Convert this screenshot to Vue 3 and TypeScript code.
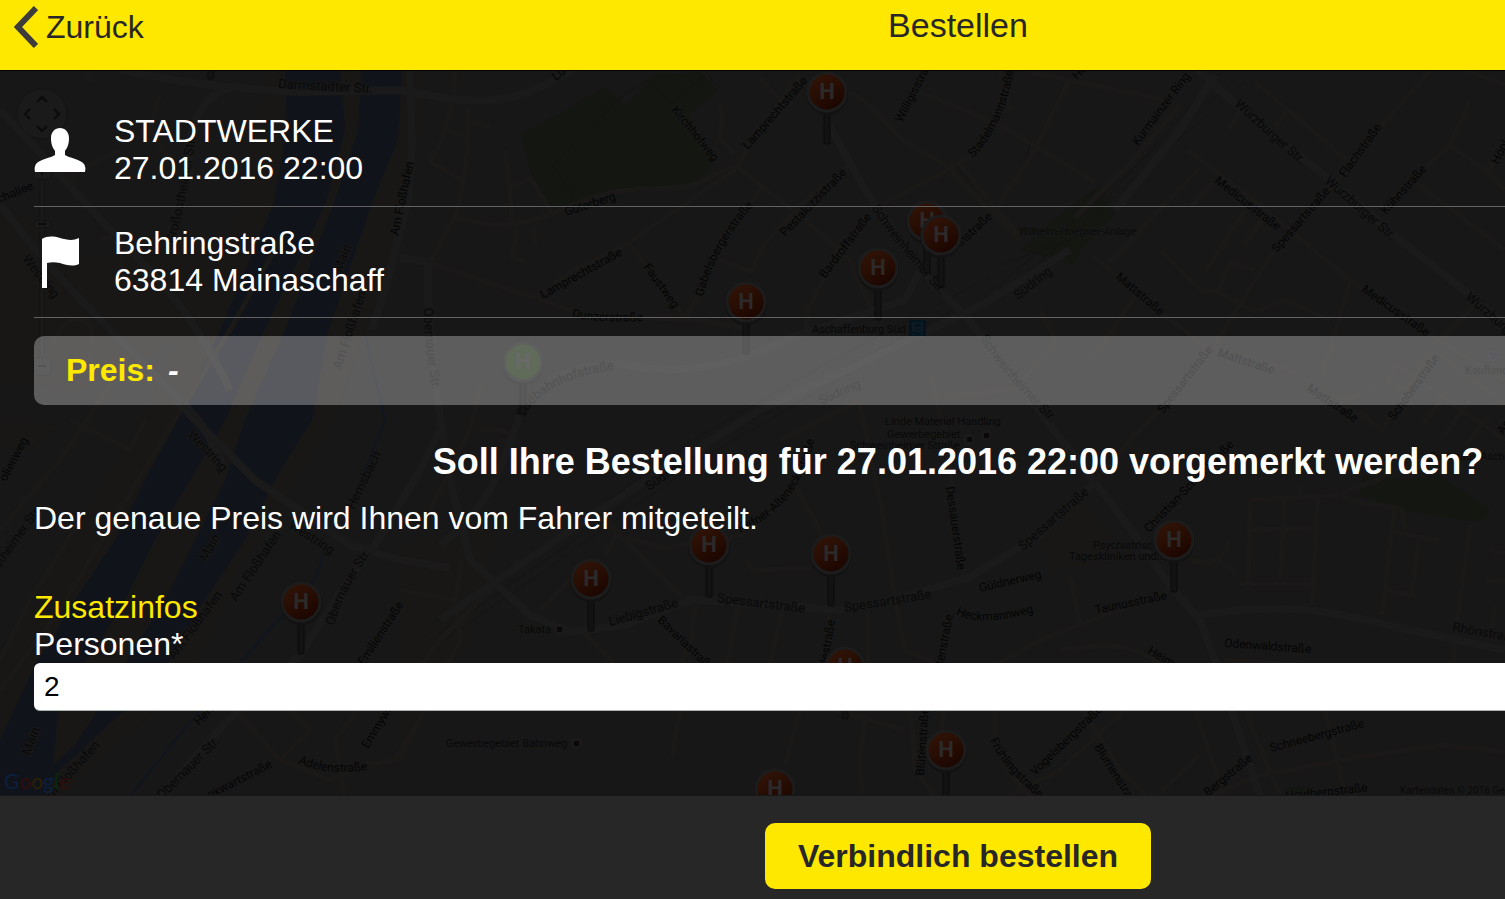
<script setup lang="ts">
import { ref } from 'vue'

interface Trip {
  name: string
  time: string
  street: string
  city: string
}

interface Pin {
  x: number
  y: number
  green?: boolean
}

interface CurvedLabel {
  text: string
  d: string
  major?: boolean
}

type StraightLabel = [text: string, x: number, y: number, angle: number, kind?: string]

const trip: Trip = {
  name: 'STADTWERKE',
  time: '27.01.2016 22:00',
  street: 'Behringstraße',
  city: '63814 Mainaschaff',
}

const persons = ref('2')

const pins: Pin[] = [
  { x: 211, y: 27 },
  { x: 827, y: 92 },
  { x: 927, y: 221 },
  { x: 941, y: 235 },
  { x: 878, y: 268 },
  { x: 746, y: 302 },
  { x: 523, y: 362, green: true },
  { x: 709, y: 545 },
  { x: 831, y: 554 },
  { x: 591, y: 579 },
  { x: 301, y: 602 },
  { x: 1174, y: 540 },
  { x: 845, y: 667 },
  { x: 946, y: 750 },
  { x: 775, y: 789 },
]

const mainRoads: string[] = [
  'M120 70 C190 84 240 90 300 92 L400 90 C440 98 470 104 510 98 C545 88 560 76 580 66',
  'M190 175 C185 130 200 90 240 86',
  'M0 205 C50 270 90 310 150 370 S200 420 225 470',
  'M175 400 L255 480 L350 545 L400 560 L450 568',
  'M410 62 L412 150 L408 200 L385 290 L372 330',
  'M0 110 C40 150 80 200 130 250 S200 330 230 390',
  'M428 262 L428 300 L436 390 L450 480 L470 560 L530 615 L570 632 L625 625 L690 600 L790 606 L840 610 L900 598 L970 577 L1040 535 L1095 482',
  'M400 258 L428 262',
  'M440 545 C500 500 505 450 520 415 C540 380 570 364 620 364 C680 376 730 368 790 338 L905 300 L925 262',
  'M825 118 L865 190 L925 275 L965 315 L1050 425 L1095 482 L1135 535 L1172 588 L1200 620 L1222 680 L1260 796',
  'M1200 615 C1280 602 1330 610 1400 628 L1505 650',
  'M440 620 L600 510 L760 410 L900 345 L985 303 L1070 250',
  'M1190 62 L1240 108 L1330 180 L1400 240 L1470 295 L1530 345',
  'M1115 210 L1180 130 L1215 75',
  'M160 796 L230 718 L300 655 L345 585 L375 545 L420 470 L440 430',
]

const minorRoads: string[] = [
  'M455 70 L453 100 L442 140 L430 162 L462 180 M468 107 L467 150 L462 190 L456 215 L430 262',
  'M442 128 L468 138 M468 120 L490 127',
  'M456 217 C490 228 520 228 550 214 L580 202 C640 180 670 195 700 182 L735 165',
  'M505 150 L510 190 L512 225 M510 187 L530 178 L552 213 M517 228 L512 258 L525 262 M533 226 L535 245',
  'M428 262 L535 298 L585 315 L645 318 L700 320 L750 330',
  'M535 298 L570 272 L625 245 L735 170 L760 130 L800 75',
  'M630 245 L680 310 L685 318 L705 285 L715 255 L762 187',
  'M735 165 L760 185 L800 215 L850 260 L875 318',
  'M715 258 L752 272 L760 250 L800 205 L850 165',
  'M720 104 L722 118 L720 138 L735 155 M760 78 L778 98',
  'M850 92 C875 105 890 130 905 142 L945 165 L1020 240 M880 205 L945 172 L985 145',
  'M920 92 L1000 125 L1095 182 M1070 78 L1035 150 L998 205 L950 250 M1030 72 L1165 100',
  'M1075 218 L1130 163 L1180 105',
  'M1092 255 L1145 300 L1210 350 M1110 262 L1142 230',
  'M960 165 L1018 235 M1000 70 L1010 110',
  'M805 335 L808 310 L845 235',
  'M1188 150 L1260 205 L1350 280 L1430 335 L1505 380',
  'M1200 168 L1130 240 M1215 180 L1190 208 M1245 210 L1205 272 M1262 220 L1243 246',
  'M1160 250 L1200 290 L1218 292 L1230 262 L1255 270 M1218 292 L1255 312 L1285 300 L1330 320 M1350 282 L1330 350 L1320 380',
  'M1273 252 L1230 320 L1195 375 L1130 440 L1095 482',
  'M1330 190 L1380 128 L1430 70 M1255 82 L1347 160 M1286 112 L1275 128 M1240 112 L1228 130',
  'M1505 85 L1460 68 M1470 100 L1450 145 L1485 170 L1505 190 M1450 145 L1385 205 M1415 182 L1505 250',
  'M1490 170 L1505 140 M1480 300 L1430 350 L1382 430 L1290 370 L1200 345',
  'M1382 430 L1360 412 M1375 385 L1350 400 L1330 395 M1395 365 L1388 380 L1420 400 M1440 355 L1505 405',
  'M1395 364 L1505 440 M1450 388 L1422 425 M1470 400 L1445 435 M1490 415 L1465 445',
  'M1140 290 L1105 340 L1090 360 M1040 310 L1058 345 L1010 390 L945 396 M930 372 L948 450 L960 560',
  'M860 405 L880 500 L895 598 M780 440 L820 420 L860 400',
  'M1250 500 L1248 590 M1285 500 L1280 580 M1318 495 L1312 605 M1250 500 L1340 495 M1247 530 L1318 528 M1240 584 L1312 584 M1300 485 L1300 498',
  'M1340 495 C1360 482 1380 485 1390 470 M1340 495 C1360 508 1385 502 1402 510 L1405 530 M1394 510 L1382 615 M1392 532 L1438 540 M1418 540 L1412 595 L1385 590',
  'M1470 525 L1455 640 L1450 700 M1490 550 L1505 553 M1485 580 L1505 582 M1495 605 L1490 640',
  'M1190 560 C1215 568 1225 555 1230 540 M1215 558 L1235 572',
  'M1070 575 L1080 625 M960 685 L1040 640 L1105 615 L1170 590 M1060 650 C1100 645 1130 640 1160 665',
  'M1225 660 L1340 668 L1450 680 M1312 668 L1312 690',
  'M685 600 L640 555 L605 520 M540 610 L570 580 M585 634 L640 690',
  'M605 556 L615 535 L665 548 L745 535 M747 560 L752 570 L810 568 M785 470 L815 520 L830 560',
  'M695 605 L692 640 L680 665 M738 605 L730 650 L720 690 M782 610 L770 665 M830 610 L825 665 M868 610 L868 665 M895 600 L905 650 L940 665',
  'M680 710 L672 755 M800 710 L785 765 M865 715 L860 765 L863 796 M820 706 L905 730',
  'M910 700 L915 770 L935 796 M995 710 C990 750 1010 780 1035 800 M945 700 L942 730',
  'M1125 710 L1060 770 L1010 796 M1080 705 L1120 770 L1150 800 M1195 710 L1225 800 M1200 755 L1110 840 M1245 710 L1280 796 M1325 710 L1340 770 L1345 800',
  'M1200 800 L1260 775 L1370 755 L1445 745 L1505 752 M1370 800 L1440 820 L1505 815',
  'M240 715 L280 760 L330 780 L370 762 M290 710 L310 730 L280 760 M345 800 L335 740 L365 700 M370 764 L395 760 L425 710',
  'M400 590 L455 600 L460 640 L440 680 L400 760 M455 600 L462 560',
  'M380 720 L440 640 L520 560 M425 520 L470 430 L482 380 M480 430 L500 430 L520 440',
  'M52 350 C55 320 85 310 92 330 L90 360 M100 240 C120 230 130 260 115 290 M70 420 L110 440 L130 450 L145 420',
  'M0 530 L60 460 L100 400 L140 340 M0 660 L30 600 L80 520',
  'M70 190 L78 160 M85 70 L95 82 M160 95 L150 130 L170 160 M60 180 L120 150',
  'M280 240 L230 330 L150 460 L60 610 L0 690',
]

const railways: string[] = [
  'M430 640 L560 550 L700 450 L830 375 L1000 285 L1080 215 L1240 75',
  'M436 646 L566 556 L706 456 L836 381 L1006 291 L1086 221 L1246 81',
  'M420 632 L550 542 L690 442 L820 367 L990 277',
  'M1000 265 L1070 240 L1110 195 L1230 62',
]

const labels: StraightLabel[] = [
  ['Darmstädter Str.', 278, 88, 3, 'major'],
  ['challee', -1, 203, -22],
  ['Am Floßhafen', 398, 236, -78],
  ['Westring', 22, 259, 52, 'major'],
  ['Main', 341, 273, -68, 'major'],
  ['Am Floßhafen', 341, 370, -72, 'major'],
  ['olienweg', 6, 482, -62],
  ['Großostheimer Str.', -22, 598, -54, 'major'],
  ['Westring', 187, 435, 47, 'major'],
  ['Westring', 288, 527, 33, 'major'],
  ['Main', 206, 562, -60, 'major'],
  ['Am Floßhafen', 236, 602, -56, 'major'],
  ['Hemsbach', 354, 510, -64, 'major'],
  ['Am Floßhafen', 174, 660, -53, 'major'],
  ['Emilienstraße', 364, 666, -57],
  ['Main', 30, 756, -70, 'major'],
  ['Am Floßhafen', 46, 806, -48, 'major'],
  ['Hemsbach', 199, 726, -45],
  ['Obernauer Str.', 162, 800, -45, 'major'],
  ['nkwartstraße', 210, 799, -27],
  ['Emmyweg', 368, 749, -58],
  ['Lo', 556, 81, -38],
  ['Kirchhofweg', 671, 110, 51],
  ['Lamprechtstraße', 748, 150, -49],
  ['Güterberg', 566, 216, -18],
  ['Lamprechtstraße', 543, 299, -29],
  ['Faustweg', 643, 267, 54],
  ['Pestalozzistraße', 785, 237, -46],
  ['Willigisstraße', 902, 123, -63],
  ['Ho', 1077, 80, -45],
  ['Kurmainzer Ring', 1138, 146, -53],
  ['Bardroffstraße', 825, 279, -53],
  ['instraße', 961, 247, -43],
  ['Wilhelm-Hoegner-Anlage', 1019, 235, 0, 'park-name'],
  ['Südring', 1018, 300, -38, 'major'],
  ['Mattstraße', 1115, 278, 40],
  ['Aschaffenburg Süd', 812, 333, 0, 'place'],
  ['Würzburger Str.', 1234, 105, 42, 'major'],
  ['Flachstraße', 1345, 178, -54],
  ['Würzburger Str.', 1324, 182, 41, 'major'],
  ['Kühnstraße', 1386, 215, -48],
  ['Medicusstraße', 1214, 182, 38],
  ['Spessartstraße', 1277, 253, -49],
  ['Medicusstraße', 1361, 291, 35],
  ['Würzburger Str.', 1465, 298, 41, 'major'],
  ['Höpl', 1498, 165, -63],
  ['Südring', 649, 491, -34, 'major'],
  ['Südring', 821, 405, -24, 'major'],
  ['Linde Material Handling', 885, 425, 0, 'place'],
  ['Gewerbegebiet', 887, 438, 0, 'place'],
  ['Schweinheimer Straße', 850, 449, 0, 'place'],
  ['Dessauerstraße', 946, 487, 82],
  ['Spessartstraße', 1023, 551, -41, 'major'],
  ['Spessartstraße', 1163, 414, -52],
  ['Christian-Schad-Straße', 1149, 533, -46],
  ['Psychiatrisc', 1093, 549, 0, 'place'],
  ['Tageskliniken und...', 1069, 560, 0, 'place'],
  ['Güldnerweg', 980, 592, -13],
  ['Mattstraße', 1217, 356, 18],
  ['Mattstraße', 1306, 390, 34],
  ['Schoberstraße', 1394, 421, -54],
  ['Kaufland', 1465, 374, 0, 'place'],
  ['Funkhaus Aschaffenburg', 1430, 460, 0, 'place'],
  ['Asc', 1503, 435, -55],
  ['Takata', 518, 633, 0, 'place'],
  ['Liebigstraße', 610, 626, -16, 'major'],
  ['Bavariastraße', 657, 621, 44],
  ['Spessartstraße', 717, 602, 7, 'major'],
  ['Spessartstraße', 845, 612, -9, 'major'],
  ['destraße', 827, 667, -80],
  ['Gewerbegebiet Bahnweg', 446, 747, 0, 'place'],
  ['Blütenstraße', 940, 682, -79],
  ['Taunusstraße', 1096, 614, -12],
  ['Heim', 1147, 653, 30],
  ['Odenwaldstraße', 1224, 647, 4],
  ['Rhönstraße', 1452, 631, 10, 'major'],
  ['Blütenstraße', 924, 776, -86],
  ['Vogelsbergstraße', 1035, 776, -44],
  ['Blumenstraße', 1094, 747, 58],
  ['Schneebergstraße', 1271, 752, -15],
  ['Bergstraße', 1208, 797, -40],
  ['Heidbergstraße', 1286, 800, -6],
  ['Kartendaten © 2016 GeoBasis-DE/BKG', 1400, 794, 0, 'legal'],
]

const curved: CurvedLabel[] = [
  { text: 'Großostheimer Str.', d: 'M174 244 Q190 190 200 100', major: true },
  { text: 'Obernauer Str.', d: 'M334 626 Q346 580 390 530', major: true },
  { text: 'Adelenstraße', d: 'M298 763 Q335 779 385 766' },
  { text: 'Gabelsbergerstraße', d: 'M703 297 Q717 240 768 190' },
  { text: 'Dunzerstraße', d: 'M572 317 Q610 325 670 319' },
  { text: 'Obernauer Str.', d: 'M424 308 Q424 350 438 420', major: true },
  { text: 'Stadelmannstraße', d: 'M973 158 Q1010 120 1016 50' },
  { text: 'Schweinheimer Str.', d: 'M872 208 Q890 240 965 322', major: true },
  { text: 'Südbahnhofstraße', d: 'M524 418 Q545 372 650 366', major: true },
  { text: 'Hefner-Alteneck-Straße', d: 'M740 533 Q815 500 818 405' },
  { text: 'Schweinheimer Str.', d: 'M980 338 Q1005 380 1075 445', major: true },
  { text: 'Heckmannweg', d: 'M956 614 Q985 630 1055 606' },
  { text: 'Frühlingstraße', d: 'M990 740 Q1003 772 1060 815' },
]

const poiDots: [number, number][] = [
  [969, 439],
  [986, 435],
  [559, 629],
  [576, 743],
]
</script>

<template>
  <div class="viewport">
    <div class="page">
      <header class="topbar">
        <button class="back" type="button">
          <svg class="chevron" viewBox="0 0 24 42" width="24" height="42" aria-hidden="true">
            <path d="M22 2 L4 21 L22 40" />
          </svg>
          <span>Zurück</span>
        </button>
        <h1 class="title">Bestellen</h1>
      </header>

      <main class="content">
        <svg class="map" aria-hidden="true">
          <defs>
            <linearGradient id="pinRed" x1="0" y1="0" x2="0.6" y2="1">
              <stop offset="0" stop-color="#351608" />
              <stop offset="1" stop-color="#1c0600" />
            </linearGradient>
            <path v-for="(c, i) in curved" :id="'street' + i" :key="i" :d="c.d" />
          </defs>
          <g transform="translate(0 -70)">
            <path class="sand" d="M265 70 L425 70 L412 200 L360 340 L335 420 L240 570 L190 680 L60 796 L0 796 L0 650 L130 440 L180 340 L80 390 L0 380 L0 200 L80 260 L230 250 Z" />
            <path class="block" d="M1080 500 L1130 560 L1050 570 L1035 530 Z M0 420 L60 425 L30 450 L0 445 Z M400 545 L500 520 L470 640 L400 740 Z" />
            <path class="water" d="M285 70 L287 130 L273 205 L218 335 L178 420 L145 480 L115 540 L75 600 L35 665 L0 740 L0 796 L45 796 L60 770 L130 705 L170 660 L205 600 L245 540 L275 480 L312 420 L327 335 L373 200 L398 140 L402 70 Z" />
            <path class="island" d="M340 70 L345 130 L325 205 L262 335 L225 420 L190 480 L155 540 L125 600 L95 650 L60 690 L53 765 L75 745 L105 700 L130 655 L165 600 L195 540 L225 480 L245 420 L283 335 L335 200 L358 130 L362 70 Z" />
            <path class="stream" d="M130 796 L200 710 L260 640 L315 580 L325 550 M345 520 L385 420 L365 335" />
            <path class="park" d="M522 135 L605 87 L625 106 L655 75 L700 72 L718 90 L688 115 L715 165 L690 186 L640 190 L580 200 L552 208 L530 170 Z M1020 250 L1060 215 L1100 185 L1115 215 L1080 250 L1075 265 Z M1362 475 L1400 480 L1440 475 L1490 510 L1480 522 L1400 510 L1360 495 Z M1285 788 L1310 786 L1310 800 L1285 800 Z" />
            <path v-for="(d, i) in railways" :key="'rail' + i" class="rail" :d="d" />
            <path v-for="(d, i) in minorRoads" :key="'minor' + i" class="minor" :d="d" />
            <path v-for="(d, i) in mainRoads" :key="'main' + i" class="main" :d="d" />
            <path class="lane" d="M573 195 L553 166 L620 98 L647 80 L672 103 L705 75 M724 92 L705 73 M955 165 L970 182 M1025 158 L1030 145" />

            <g class="control">
              <circle cx="42" cy="114" r="25" />
              <path class="arrows" d="M37 102 L42 97 L47 102 M37 126 L42 131 L47 126 M30 109 L25 114 L30 119 M54 109 L59 114 L54 119" />
              <path d="M40 180 h4 v180 h-4 Z" />
              <rect x="34" y="163" width="17" height="16" rx="2" />
              <rect x="34" y="221" width="17" height="7" rx="2" />
              <rect x="34" y="358" width="17" height="17" rx="2" />
              <path class="arrows" d="M38 171 h8 M42 167 v8 M38 224 h8 M38 366 h8" />
            </g>

            <text
              v-for="([text, x, y, angle, kind], i) in labels"
              :key="'label' + i"
              :class="['label', kind]"
              :transform="`translate(${x} ${y}) rotate(${angle})`"
            >{{ text }}</text>
            <text v-for="(c, i) in curved" :key="'curve' + i" :class="['label', { major: c.major }]">
              <textPath :href="'#street' + i">{{ c.text }}</textPath>
            </text>

            <g v-for="([x, y], i) in poiDots" :key="'dot' + i">
              <circle class="poi-ring" :cx="x" :cy="y" r="6" />
              <rect class="poi" :x="x - 2" :y="y - 2" width="5" height="5" />
            </g>
            <g>
              <rect class="station" x="909" y="320" width="17" height="16" rx="1" />
              <path class="train" d="M913 323 h9 v8 h-9 Z M913 328 h9 M914 333 l-1 2 M921 333 l1 2" />
            </g>
            <g>
              <circle class="poi-ring" cx="1493" cy="356" r="6" />
              <path class="cart" d="M1489 353 h2 l1 4 h4 l1 -3 h-6 M1492 359 h1 M1496 359 h1" />
            </g>
            <text class="google" x="4" y="789"><tspan class="g-blue">G</tspan><tspan class="g-red">o</tspan><tspan class="g-yellow">o</tspan><tspan class="g-blue">g</tspan><tspan class="g-green">l</tspan><tspan class="g-red">e</tspan></text>

            <g v-for="(p, i) in pins" :key="'pin' + i" :transform="`translate(${p.x} ${p.y})`">
              <rect class="pole" x="-3" y="18" width="6" height="34" rx="1" />
              <circle class="shade" cy="2" r="21" />
              <circle :class="['disc', { green: p.green }]" r="19" />
              <text class="stop" y="7">H</text>
            </g>
          </g>
        </svg>

        <section class="row first">
          <svg class="icon" viewBox="0 0 52 44" width="52" height="44" aria-hidden="true">
            <path d="M26 0 C31 0 35 4 35 10 C35 17 33 20 31 23 V27 C35 30 46 31 50 36 C51 38 52 40 51 44 H1 C0 40 1 38 2 36 C6 31 17 30 21 27 V23 C19 20 17 17 17 10 C17 4 21 0 26 0 Z" />
          </svg>
          <p class="lines">{{ trip.name }}<br />{{ trip.time }}</p>
        </section>

        <section class="row">
          <svg class="icon" viewBox="0 0 52 52" width="52" height="52" aria-hidden="true">
            <path d="M8 3 C13 0 19 0 26 2 C33 4 39 5 45 2 V28 C39 31 32 29 26 27 C21 26 17 26 13 27 V52 H8 Z" />
          </svg>
          <p class="lines">{{ trip.street }}<br />{{ trip.city }}</p>
        </section>

        <section class="price">
          <strong>Preis:</strong>
          <em>-</em>
        </section>

        <h2 class="question">Soll Ihre Bestellung für {{ trip.time }} vorgemerkt werden?</h2>
        <p class="note">Der genaue Preis wird Ihnen vom Fahrer mitgeteilt.</p>

        <form class="extras" @submit.prevent>
          <h3>Zusatzinfos</h3>
          <label for="persons">Personen*</label>
          <input id="persons" v-model="persons" type="text" inputmode="numeric" required />
        </form>
      </main>

      <footer class="footer">
        <button class="submit" type="button">Verbindlich bestellen</button>
      </footer>
    </div>
  </div>
</template>

<style>
body {
  margin: 0;
  background: #272727;
}
</style>

<style scoped>
.viewport {
  min-height: 100vh;
  overflow: hidden;
}

.page {
  display: flex;
  flex-direction: column;
  box-sizing: border-box;
  width: 100%;
  min-width: 1916px;
  min-height: 100vh;
  color: #fff;
  background: #272727;
  font-family: "Liberation Sans", Arial, sans-serif;
  font-size: 32px;
  line-height: 37px;
}

h1,
h2,
h3,
p {
  margin: 0;
  font-weight: 400;
}

button,
input {
  border: 0;
  font-family: inherit;
}

.topbar {
  display: grid;
  grid-template-columns: 1fr auto 1fr;
  align-items: start;
  box-sizing: border-box;
  height: 71px;
  padding: 4px 14px 0;
  border-bottom: 1px solid #000;
  color: #272727;
  background: #ffe800;
}

.back {
  display: flex;
  justify-self: start;
  align-items: center;
  gap: 8px;
  padding: 2px 0 0;
  color: inherit;
  background: none;
  font-size: 32px;
  line-height: 42px;
}

.chevron path {
  fill: none;
  stroke: #3e3c3a;
  stroke-width: 6;
}

.title {
  font-size: 34px;
  line-height: 42px;
}

.content {
  position: relative;
  flex: 1;
  padding: 0 34px 24px;
  overflow: hidden;
  background: #171717;
}

.content > * {
  position: relative;
}

.content > .map {
  position: absolute;
  top: -1px;
  left: 0;
  width: 100%;
  height: 100%;
}

.row {
  display: flex;
  align-items: center;
  gap: 28px;
  padding: 18px 0;
  border-bottom: 1px solid #626262;
}

.row.first {
  padding: 42px 0 19px;
}

.icon {
  fill: #fff;
}

.price {
  display: flex;
  align-items: center;
  gap: 13px;
  margin-top: 18px;
  padding: 16px 32px;
  border-radius: 10px;
  background: rgba(255, 255, 255, 0.3);
  font-weight: 700;
}

.price strong {
  color: #ffe800;
}

.question {
  margin-top: 36px;
  font-size: 36px;
  font-weight: 700;
  line-height: 42px;
  text-align: center;
}

.note {
  margin-top: 17px;
}

.extras {
  display: flex;
  flex-direction: column;
  margin-top: 52px;
}

.extras h3 {
  color: #ffe800;
  font-size: 32px;
}

.extras input {
  box-sizing: border-box;
  height: 48px;
  padding: 0 10px;
  border-bottom: 1px solid #aab4ac;
  border-radius: 6px;
  color: #000;
  background: #fff;
  font-size: 28px;
}

.footer {
  display: flex;
  justify-content: center;
  padding: 27px 0 10px;
  background: #272727;
}

.submit {
  padding: 0 33px;
  border-radius: 10px;
  color: #272727;
  background: #ffe800;
  font-size: 32px;
  font-weight: 700;
  line-height: 66px;
}

.sand,
.island {
  fill: #191715;
}

.block {
  fill: #181716;
}

.water {
  fill: #10141a;
}

.park {
  fill: #141711;
}

.stream,
.rail,
.minor,
.main,
.lane,
.arrows {
  fill: none;
}

.stream {
  stroke: #10151f;
  stroke-width: 2;
}

.rail {
  stroke: #141414;
  stroke-width: 1;
}

.minor {
  stroke: #1a1917;
  stroke-width: 5;
  stroke-linejoin: round;
}

.main {
  stroke: #1a1a1a;
  stroke-width: 8;
  stroke-linejoin: round;
}

.lane {
  stroke: #111310;
}

.control {
  fill: #1a1a1a;
  stroke: #131313;
}

.control .arrows {
  fill: none;
  stroke: #0b0b0c;
  stroke-width: 2;
}

.label {
  fill: #040404;
  stroke: #181818;
  stroke-width: 2;
  paint-order: stroke;
  font-family: Roboto, "Liberation Sans", sans-serif;
  font-size: 12px;
}

.label.major {
  fill: #090909;
  font-size: 13px;
}

.label.place {
  fill: #080808;
  font-size: 11px;
}

.label.park-name {
  fill: #090c08;
  font-size: 11px;
  font-style: italic;
}

.label.legal {
  fill: #090909;
  font-size: 10px;
}

.poi-ring {
  fill: #1b1a1a;
}

.poi {
  fill: #0c0808;
}

.station {
  fill: #03131f;
}

.train {
  fill: none;
  stroke: #1b2226;
}

.cart {
  fill: none;
  stroke: #0d1020;
}

.google {
  font-family: Lato, "Liberation Sans", sans-serif;
  font-size: 21px;
}

.g-blue {
  fill: #0c1f3e;
}

.g-red {
  fill: #300c0c;
}

.g-yellow {
  fill: #2b2003;
}

.g-green {
  fill: #06280f;
}

.pole {
  fill: #121212;
  stroke: #0b0b0b;
}

.shade {
  fill: #121212;
}

.disc {
  fill: url(#pinRed);
  stroke: #1c1c1d;
  stroke-width: 3;
}

.disc.green {
  fill: #1d2c14;
}

.stop {
  fill: #2c2929;
  font-family: Roboto, "Liberation Sans", sans-serif;
  font-size: 22px;
  font-weight: 700;
  text-anchor: middle;
}
</style>
